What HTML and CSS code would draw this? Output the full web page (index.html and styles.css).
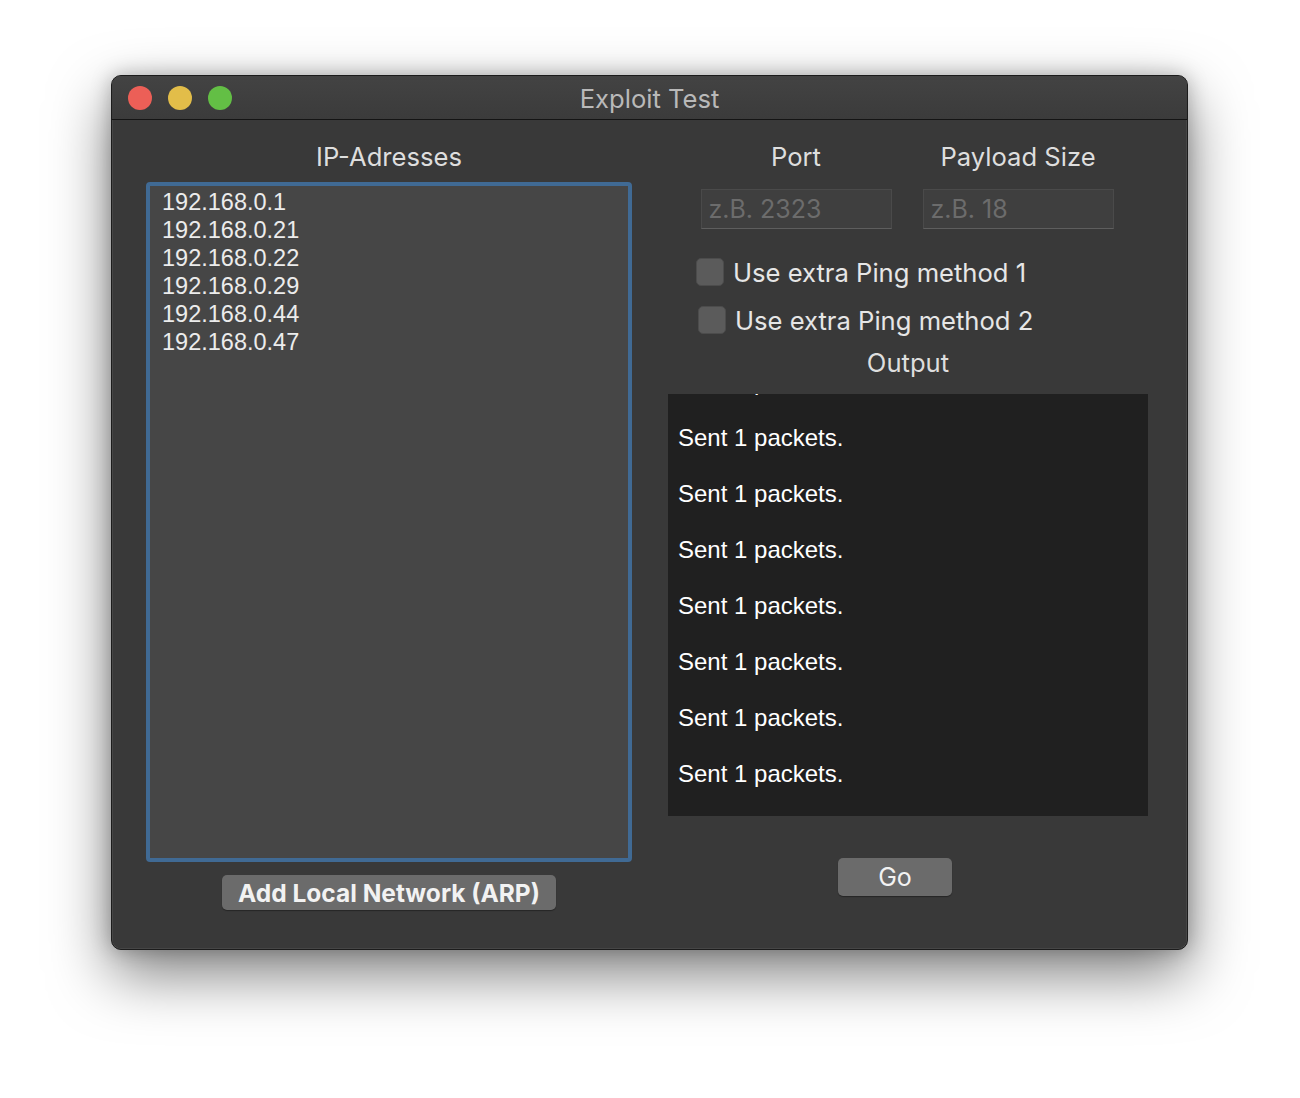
FILE: index.html
```html
<!DOCTYPE html>
<html>
<head>
<meta charset="utf-8">
<link rel="stylesheet" href="styles.css">
</head>
<body>
<div class="window">
  <div class="titlebar">
    <div class="lights">
      <span class="light red"></span>
      <span class="light yellow"></span>
      <span class="light green"></span>
    </div>
    <div class="title">Exploit Test</div>
  </div>
  <div class="content">
    <div class="left">
      <div class="label">IP-Adresses</div>
      <div class="list">
        <div class="item">192.168.0.1</div>
        <div class="item">192.168.0.21</div>
        <div class="item">192.168.0.22</div>
        <div class="item">192.168.0.29</div>
        <div class="item">192.168.0.44</div>
        <div class="item">192.168.0.47</div>
      </div>
      <button class="btn arp">Add Local Network (ARP)</button>
    </div>
    <div class="right">
      <div class="fields">
        <div class="field-group">
          <div class="label">Port</div>
          <div class="field">z.B. 2323</div>
        </div>
        <div class="field-group">
          <div class="label">Payload Size</div>
          <div class="field">z.B. 18</div>
        </div>
      </div>
      <label class="check c1"><span class="box"></span>Use extra Ping method 1</label>
      <label class="check c2"><span class="box"></span>Use extra Ping method 2</label>
      <div class="label out-label">Output</div>
      <div class="output">
        <div class="out-inner">
          <div class="line">Sent 1 packets.</div>
          <div class="line">Sent 1 packets.</div>
          <div class="line">Sent 1 packets.</div>
          <div class="line">Sent 1 packets.</div>
          <div class="line">Sent 1 packets.</div>
          <div class="line">Sent 1 packets.</div>
          <div class="line">Sent 1 packets.</div>
          <div class="line">Sent 1 packets.</div>
        </div>
      </div>
      <div class="go-row"><button class="btn go">Go</button></div>
    </div>
  </div>
</div>
</body>
</html>
```

FILE: styles.css
```css
html, body {
  margin: 0;
  padding: 0;
  background: #ffffff;
}
body {
  width: 1300px;
  height: 1098px;
  overflow: hidden;
  font-family: Inter, "Liberation Sans", sans-serif;
}
.window {
  margin: 75px 0 0 111px;
  width: 1075px;
  height: 873px;
  border: 1px solid #1c1c1c;
  border-radius: 10px;
  background: #393939;
  box-shadow: 0 0 0 0.5px #555 inset, 0 24px 60px rgba(0,0,0,0.5), 0 0 20px rgba(0,0,0,0.25);
  overflow: hidden;
  display: flex;
  flex-direction: column;
}
.titlebar {
  height: 43px;
  flex: none;
  border-bottom: 1px solid #141414;
  background: linear-gradient(#434343, #3b3b3b);
  display: flex;
  align-items: center;
  position: relative;
}
.lights {
  display: flex;
  gap: 16px;
  margin-left: 16px;
}
.light {
  width: 24px;
  height: 24px;
  border-radius: 50%;
  display: block;
}
.red { background: #ec5f57; }
.yellow { background: #e2bd49; }
.green { background: #63bf45; }
.title {
  position: absolute;
  left: 0;
  right: 0;
  text-align: center;
  color: #b9b9b9;
  font-size: 25.6px;
  top: 7px;
}
.content {
  flex: 1;
  display: flex;
}
.left {
  width: 486px;
  margin-left: 34px;
  display: flex;
  flex-direction: column;
  align-items: center;
}
.label {
  color: #dedede;
  font-size: 25.6px;
  line-height: 30px;
  text-align: center;
}
.left > .label {
  margin-top: 22px;
}
.list {
  margin-top: 10px;
  border: 4px solid #406a94;
  border-radius: 4px;
  background: #464646;
  padding: 2px 0 0 12px;
  box-sizing: content-box;
  width: 466px;
  height: 670px;
}
.item {
  font-family: "Liberation Sans", Arial, sans-serif;
  color: #ececec;
  font-size: 23.5px;
  line-height: 28px;
}
.btn {
  border: none;
  border-radius: 5px;
  background: #6b6b6b;
  color: #f2f2f2;
  font-family: Inter, "Liberation Sans", sans-serif;
  padding: 0;
  box-shadow: 0 1px 1px rgba(0,0,0,0.35);
}
.arp {
  margin-top: 13px;
  width: 334px;
  height: 35px;
  font-size: 24.5px;
  font-weight: 700;
}
.right {
  width: 480px;
  margin-left: 36px;
  display: flex;
  flex-direction: column;
}
.fields {
  display: flex;
  justify-content: center;
  gap: 31px;
  margin-top: 22px;
  padding-right: 2px;
}
.field-group {
  width: 191px;
  display: flex;
  flex-direction: column;
  align-items: center;
}
.field {
  margin-top: 17px;
  height: 38px;
  box-sizing: content-box;
  border: 1px solid #4a4a4a;
  border-bottom-color: #5e5e5e;
  background: #3f3f3f;
  color: #6c6c6c;
  font-size: 25px;
  line-height: 38px;
  padding: 0;
  text-indent: 7px;
  align-self: stretch;
}
.check {
  display: flex;
  align-items: center;
  color: #e6e6e6;
  font-size: 25.6px;
  height: 28px;
}
.box {
  width: 26px;
  height: 26px;
  border-radius: 5px;
  background: #5b5b5b;
  border: 1px solid #4c4c4c;
  margin-right: 9px;
  flex: none;
}
.c1 {
  margin-top: 29px;
  margin-left: 28px;
}
.c2 {
  margin-top: 20px;
  margin-left: 30px;
}
.out-label {
  margin-top: 14px;
}
.output {
  margin-top: 16px;
  height: 422px;
  background: #202020;
  overflow: hidden;
}
.out-inner {
  margin-top: -40px;
  padding-left: 10px;
}
.line {
  font-family: "Liberation Sans", Arial, sans-serif;
  color: #ffffff;
  font-size: 24px;
  line-height: 56px;
}
.go-row {
  display: flex;
  justify-content: center;
  margin-top: 42px;
}
.go {
  width: 114px;
  height: 38px;
  font-size: 25px;
  margin-left: -26px;
}
```
